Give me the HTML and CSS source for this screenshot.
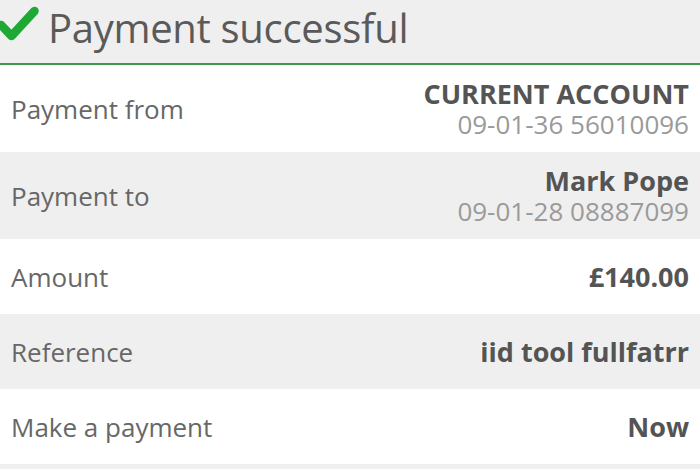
FILE: index.html
```html
<!DOCTYPE html>
<html lang="en">
<head>
    <meta charset="UTF-8">
    <meta name="viewport" content="width=device-width, initial-scale=1.0">
    <title>Payment successful</title>
    <link rel="stylesheet" href="styles.css">
</head>
<body>
    <div class="header">
        <svg class="tick" width="42" height="40" viewBox="0 0 42 40">
            <path d="M4 22 L14.5 33 L37.5 8" fill="none" stroke="#1fa834" stroke-width="8.5" stroke-linecap="round" stroke-linejoin="round"/>
        </svg>
        <h1>Payment successful</h1>
    </div>

    <div class="details">
        <div class="row tall">
            <span class="label">Payment from</span>
            <div class="value">
                <span class="main">CURRENT ACCOUNT</span>
                <span class="sub">09-01-36 56010096</span>
            </div>
        </div>
        <div class="row tall alt">
            <span class="label">Payment to</span>
            <div class="value">
                <span class="main">Mark Pope</span>
                <span class="sub">09-01-28 08887099</span>
            </div>
        </div>
        <div class="row">
            <span class="label">Amount</span>
            <div class="value"><span class="main">£140.00</span></div>
        </div>
        <div class="row alt">
            <span class="label">Reference</span>
            <div class="value"><span class="main">iid tool fullfatrr</span></div>
        </div>
        <div class="row">
            <span class="label">Make a payment</span>
            <div class="value"><span class="main">Now</span></div>
        </div>
    </div>
</body>
</html>
```

FILE: styles.css
```css
body {
    margin: 0;
    font-family: "Open Sans", "Noto Sans", sans-serif;
    background-color: #efefef;
    color: #555;
}

.header {
    height: 63px;
    border-bottom: 2px solid #3c9a4a;
    background-color: #efefef;
    display: flex;
    align-items: center;
    gap: 9px;
}

.tick {
    margin: -18px 0 0 -3px;
    flex-shrink: 0;
}

h1 {
    margin: 0 0 8px 0;
    font-size: 40px;
    font-weight: normal;
    color: #5a5a5a;
    letter-spacing: -0.3px;
}

.row {
    height: 75px;
    display: flex;
    align-items: center;
    justify-content: space-between;
    padding: 0 11px;
    background-color: #fff;
}

.row.tall {
    height: 87px;
}

.row.alt {
    background-color: #efefef;
}

.label {
    font-size: 26px;
    color: #676767;
}

.value {
    display: flex;
    flex-direction: column;
    align-items: flex-end;
}

.main {
    font-size: 27px;
    font-weight: bold;
    color: #545454;
    line-height: 31px;
}

.sub {
    font-size: 26px;
    color: #9a9a9a;
    line-height: 31px;
}
```
